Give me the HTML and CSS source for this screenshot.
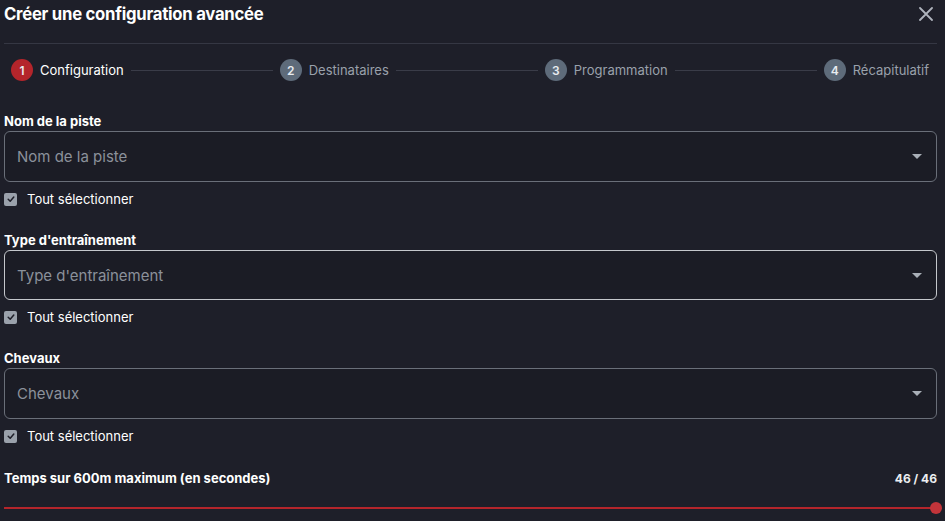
FILE: index.html
```html
<!DOCTYPE html>
<html lang="fr">
<head>
<meta charset="utf-8">
<link rel="stylesheet" href="styles.css">
</head>
<body>
<div class="dialog">
  <header class="head">
    <h1 class="title">Créer une configuration avancée</h1>
    <button class="close" aria-label="Fermer">
      <svg width="14" height="14" viewBox="0 0 14 14"><path d="M1 1L13 13M13 1L1 13" stroke="#aeb3bc" stroke-width="1.8" stroke-linecap="round"/></svg>
    </button>
  </header>
  <div class="divider"></div>
  <nav class="stepper">
    <div class="step active"><span class="num">1</span><span class="lbl">Configuration</span></div>
    <div class="line"></div>
    <div class="step"><span class="num">2</span><span class="lbl">Destinataires</span></div>
    <div class="line"></div>
    <div class="step"><span class="num">3</span><span class="lbl">Programmation</span></div>
    <div class="line"></div>
    <div class="step"><span class="num">4</span><span class="lbl">Récapitulatif</span></div>
  </nav>

  <section class="field">
    <label class="flabel">Nom de la piste</label>
    <div class="select"><span class="ph">Nom de la piste</span><span class="caret"></span></div>
    <div class="check"><span class="box"><svg width="10" height="10" viewBox="0 0 10 10"><path d="M2.2 5.2L4.2 7.2L7.8 3" fill="none" stroke="#1e1f29" stroke-width="1.5" stroke-linecap="round" stroke-linejoin="round"/></svg></span><span>Tout sélectionner</span></div>
  </section>

  <section class="field">
    <label class="flabel">Type d'entraînement</label>
    <div class="select focus"><span class="ph">Type d'entraînement</span><span class="caret"></span></div>
    <div class="check"><span class="box"><svg width="10" height="10" viewBox="0 0 10 10"><path d="M2.2 5.2L4.2 7.2L7.8 3" fill="none" stroke="#1e1f29" stroke-width="1.5" stroke-linecap="round" stroke-linejoin="round"/></svg></span><span>Tout sélectionner</span></div>
  </section>

  <section class="field">
    <label class="flabel">Chevaux</label>
    <div class="select"><span class="ph">Chevaux</span><span class="caret"></span></div>
    <div class="check"><span class="box"><svg width="10" height="10" viewBox="0 0 10 10"><path d="M2.2 5.2L4.2 7.2L7.8 3" fill="none" stroke="#1e1f29" stroke-width="1.5" stroke-linecap="round" stroke-linejoin="round"/></svg></span><span>Tout sélectionner</span></div>
  </section>

  <section class="range">
    <div class="range-head"><span class="flabel">Temps sur 600m maximum (en secondes)</span><span class="count">46 / 46</span></div>
    <div class="track"><span class="thumb"></span></div>
  </section>
</div>
</body>
</html>
```
FILE: styles.css
```css
* { box-sizing: border-box; }
html, body { margin: 0; padding: 0; }
body {
  background: #1e1f29;
  font-family: Inter, "Noto Sans", sans-serif;
  color: #ffffff;
  width: 945px;
  height: 521px;
  overflow: hidden;
}
.dialog { padding: 0 8px 0 4px; }
.head {
  display: flex;
  align-items: center;
  justify-content: space-between;
  height: 28px;
}
.title {
  margin: 0;
  font-size: 16.7px;
  font-weight: 700;
  letter-spacing: -0.25px;
}
.close {
  background: none;
  border: 0;
  padding: 0;
  width: 22px;
  height: 22px;
  display: flex;
  align-items: center;
  justify-content: center;
}
.divider { margin-top: 15px; height: 1px; background: #353743; }
.stepper {
  display: flex;
  align-items: center;
  height: 26px;
  margin-top: 13px;
  padding: 0 8px 0 7px;
}
.step { display: flex; align-items: center; gap: 7px; }
.num {
  width: 22px; height: 22px; border-radius: 50%;
  background: #5e6b7a;
  color: #e8ecf0;
  font-size: 12px; font-weight: 600;
  display: flex; align-items: center; justify-content: center;
}
.step.active .num { background: #b4252b; }
.lbl { font-size: 13px; color: #9aa1ab; }
.step.active .lbl { color: #ffffff; }
.line { flex: 1; height: 1px; background: #3a3c48; margin: 0 7px; }
.field { display: flex; flex-direction: column; }
.stepper + .field { margin-top: 30px; }
.field + .field { margin-top: 25px; }
.flabel { font-size: 13px; font-weight: 700; line-height: 16px; color: #fff; }
.select {
  margin-top: 2px;
  height: 51px;
  border: 1px solid #6a6f79;
  border-radius: 6px;
  background: #1b1c25;
  display: flex;
  align-items: center;
  justify-content: space-between;
  padding: 0 14px 0 12px;
}
.select.focus { border-color: #c4c7cc; height: 50px; }
.ph { font-size: 15px; color: #8b919b; }
.caret {
  width: 0; height: 0;
  border-left: 5px solid transparent;
  border-right: 5px solid transparent;
  border-top: 5px solid #a9afb8;
}
.check {
  display: flex; align-items: center; gap: 10px;
  margin-top: 9px;
  font-size: 13px; color: #fff; line-height: 16px;
}
.box {
  width: 13px; height: 13px; border-radius: 2px;
  background: #9aa1ab;
  display: flex; align-items: center; justify-content: center;
}
.range { margin-top: 26px; }
.range-head { display: flex; justify-content: space-between; align-items: center; }
.count { font-size: 12px; font-weight: 700; color: #eceef1; }
.track {
  margin-top: 21px;
  height: 2px;
  background: #b4252b;
  position: relative;
}
.thumb {
  position: absolute;
  right: -5px; top: -5px;
  width: 12px; height: 12px; border-radius: 50%;
  background: #c2343a;
}
```
